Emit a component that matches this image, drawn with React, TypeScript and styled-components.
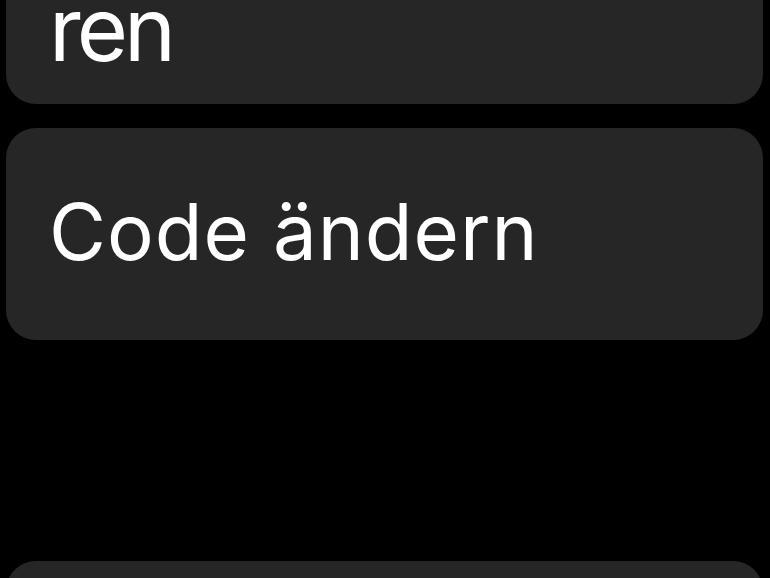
import React from "react";
import styled, { createGlobalStyle } from "styled-components";

const Global = createGlobalStyle`
  html, body { margin: 0; padding: 0; background: #000; }
  body { font-family: Inter, Roboto, "Liberation Sans", sans-serif; overflow: hidden; }
`;

const Screen = styled.div`
  width: 770px;
  height: 578px;
  background: #000;
  overflow: hidden;
  display: flex;
  flex-direction: column;
  padding: 0 7px 0 6px;
  box-sizing: border-box;
`;

const List = styled.div`
  display: flex;
  flex-direction: column;
  gap: 24px;
  margin-top: -55px;
`;

const Card = styled.div<{ $size: number; $pt: number; $pb: number; $ls: number }>`
  background: #262626;
  border-radius: 30px;
  color: #fff;
  font-size: ${(p) => p.$size}px;
  letter-spacing: ${(p) => p.$ls}px;
  line-height: 1;
  padding: ${(p) => p.$pt}px 42px ${(p) => p.$pb}px 43px;
  flex-shrink: 0;
`;

const Spacer = styled.div`
  height: 173px;
  flex-shrink: 0;
`;

export default function App() {
  return (
    <>
      <Global />
      <Screen>
        <List>
          <Card $size={88} $pt={40} $pb={31} $ls={-4}>ren</Card>
          <Card $size={78} $pt={65} $pb={69} $ls={1}>Code ändern</Card>
          <Spacer />
          <Card $size={78} $pt={65} $pb={69} $ls={0}>&nbsp;</Card>
        </List>
      </Screen>
    </>
  );
}
